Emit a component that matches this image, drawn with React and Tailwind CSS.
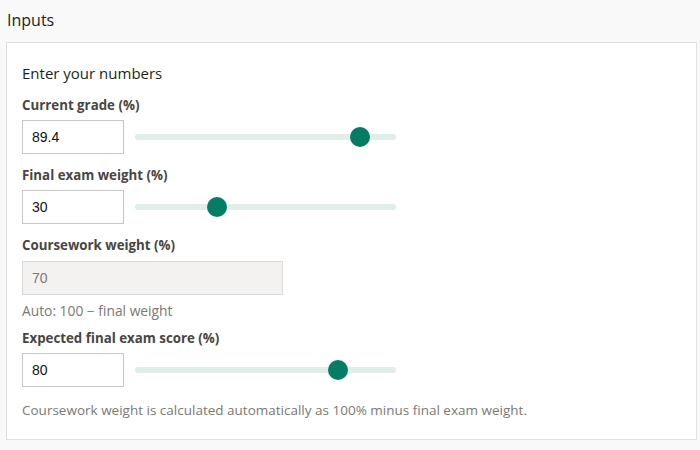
import React, { useState } from 'react';

const font = { fontFamily: '"Segoe UI", "Open Sans", sans-serif' };
const mono = { fontFamily: '"Liberation Sans", Arial, sans-serif' };

const Slider = ({ value, min = 0, max = 100 }) => {
  const pct = (value - min) / (max - min);
  return (
    <div className="relative w-[261px] h-[20px] flex items-center">
      <div className="w-full h-[6px] rounded-full bg-[#e0eeea]"></div>
      <div
        className="absolute top-0 w-[20px] h-[20px] rounded-full bg-[#047c66]"
        style={{ left: `${pct * 241}px` }}
      ></div>
    </div>
  );
};

const Field = ({ label, value, children }) => (
  <div className="flex flex-col">
    <label className="text-[13.3px] font-bold text-[#484644] leading-[18px] mb-[6px]">{label}</label>
    <div className="flex items-center gap-[11px]">
      <div className="w-[102px] h-[34px] border border-[#c8c6c4] bg-white flex items-center px-[9px] text-[14px] text-[#111]" style={mono}>
        {value}
      </div>
      {children}
    </div>
  </div>
);

export default function App() {
  const [grade] = useState(89.4);
  const [weight] = useState(30);
  const [expected] = useState(80);

  return (
    <div className="w-[700px] h-[450px] bg-[#faf9f9] pl-[6px] pr-[3px] pt-[9px]" style={font}>
      <h2 className="text-[16px] font-medium text-[#201f1e] leading-[22px] pl-[1px] mb-[11px]">Inputs</h2>
      <div className="bg-white border border-[#e1dfdd] pl-[15px] pr-4 pt-[20px] pb-[20px] flex flex-col">
        <div className="text-[15px] text-[#201f1e] leading-[20px] mb-[13px]">Enter your numbers</div>
        <div className="flex flex-col gap-[12px]">
          <Field label="Current grade (%)" value={grade}>
            <Slider value={grade} />
          </Field>
          <Field label="Final exam weight (%)" value={weight}>
            <Slider value={weight} />
          </Field>
          <div className="flex flex-col">
            <label className="text-[13.3px] font-bold text-[#484644] leading-[18px] mb-[7px]">Coursework weight (%)</label>
            <div className="w-[261px] h-[34px] border border-[#dcdad8] bg-[#f3f2f1] flex items-center px-[9px] text-[14px] text-[#7a7876]" style={mono}>
              {100 - weight}
            </div>
            <div className="text-[13.8px] text-[#7a7876] mt-[7px] leading-[18px] -mb-[3px]">Auto: 100 − final weight</div>
          </div>
          <Field label="Expected final exam score (%)" value={expected}>
            <Slider value={expected} />
          </Field>
        </div>
        <p className="text-[13.5px] text-[#7a7876] mt-[14px] leading-[18px]">
          Coursework weight is calculated automatically as 100% minus final exam weight.
        </p>
      </div>
    </div>
  );
}
